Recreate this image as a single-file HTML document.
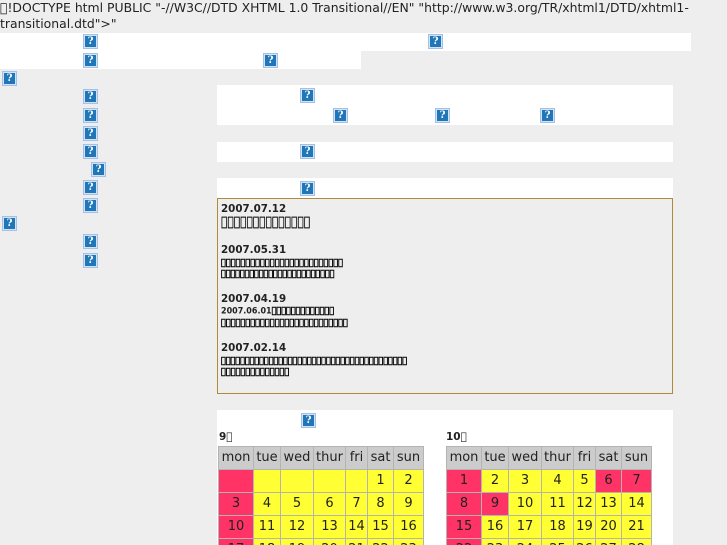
<!DOCTYPE html>
<html><head><meta charset="utf-8"><style>
html,body{margin:0;padding:0;width:727px;height:545px;overflow:hidden}
body{background:#eee;font-family:"DejaVu Sans",sans-serif;color:#222}
#p{position:absolute;left:0;top:0;width:727px;height:545px;overflow:hidden;background:#eee}
.w{position:absolute;background:#fff}
.i{position:absolute;width:15px;height:15px;box-sizing:border-box;background:#1f76b8;border:1px solid #a3c0e6;box-shadow:inset 0 0 0 1px #d3e2f5;color:#fff;font:bold 10px/13px "DejaVu Serif",serif;text-align:center}
.t{position:absolute;white-space:nowrap}
.d{position:absolute;left:221px;font:bold 10.3px/12px "DejaVu Sans",sans-serif;white-space:nowrap;color:#222}
.b{position:absolute;left:221px;white-space:nowrap;font:10.5px/12px "DejaVu Sans",sans-serif;color:#000;transform:scaleY(1.25);transform-origin:left center;-webkit-text-stroke:.2px #000}
.s{position:absolute;left:221px;white-space:nowrap;font:8px/10px "DejaVu Sans",sans-serif;color:#000;transform:scaleY(1.15);transform-origin:left center;-webkit-text-stroke:.45px #000}
.s b{-webkit-text-stroke:0;color:#222}
table{position:absolute;border-collapse:separate;border-spacing:1px;background:#b4b4b4;table-layout:fixed;font:13px "DejaVu Sans",sans-serif;color:#222}
td{padding:0;text-align:center;background:#ff3;height:22px;line-height:22px}
th{padding:0;font-weight:normal;background:#ccc;height:22px;line-height:22px}
td.r{background:#f36}
</style></head><body><div id="p">
<div class="t" style="left:0;top:0;font-size:12.42px;line-height:16px;width:727px">&#xE000;!DOCTYPE html PUBLIC "-//W3C//DTD XHTML 1.0 Transitional//EN" "http://www.w3.org/TR/xhtml1/DTD/xhtml1-<br>transitional.dtd"&gt;"</div>
<div class="w" style="left:0;top:33px;width:691px;height:18px"></div>
<div class="w" style="left:0;top:51px;width:361px;height:18px"></div>
<div class="w" style="left:217px;top:85px;width:456px;height:40px"></div>
<div class="w" style="left:217px;top:142px;width:456px;height:20px"></div>
<div class="w" style="left:217px;top:178px;width:456px;height:20px"></div>
<div class="w" style="left:217px;top:410px;width:456px;height:135px"></div>
<div style="position:absolute;left:217px;top:198px;width:454px;height:194px;border:1px solid #b08a3c;background:#eee"></div>
<div class="i" style="left:83px;top:34px">?</div>
<div class="i" style="left:428px;top:34px">?</div>
<div class="i" style="left:83px;top:53px">?</div>
<div class="i" style="left:263px;top:53px">?</div>
<div class="i" style="left:2px;top:71px">?</div>
<div class="i" style="left:83px;top:89px">?</div>
<div class="i" style="left:83px;top:108px">?</div>
<div class="i" style="left:83px;top:126px">?</div>
<div class="i" style="left:83px;top:144px">?</div>
<div class="i" style="left:91px;top:162px">?</div>
<div class="i" style="left:83px;top:180px">?</div>
<div class="i" style="left:83px;top:198px">?</div>
<div class="i" style="left:2px;top:216px">?</div>
<div class="i" style="left:83px;top:234px">?</div>
<div class="i" style="left:83px;top:253px">?</div>
<div class="i" style="left:300px;top:88px">?</div>
<div class="i" style="left:333px;top:108px">?</div>
<div class="i" style="left:435px;top:108px">?</div>
<div class="i" style="left:540px;top:108px">?</div>
<div class="i" style="left:300px;top:144px">?</div>
<div class="i" style="left:300px;top:181px">?</div>
<div class="i" style="left:301px;top:413px">?</div>
<div class="d" style="top:203px">2007.07.12</div>
<div class="b" style="top:216px;letter-spacing:.06px">&#xE000;&#xE000;&#xE000;&#xE000;&#xE000;&#xE000;&#xE000;&#xE000;&#xE000;&#xE000;&#xE000;&#xE000;&#xE000;&#xE000;</div>
<div class="d" style="top:244px">2007.05.31</div>
<div class="s" style="top:258px;letter-spacing:.08px">&#xE000;&#xE000;&#xE000;&#xE000;&#xE000;&#xE000;&#xE000;&#xE000;&#xE000;&#xE000;&#xE000;&#xE000;&#xE000;&#xE000;&#xE000;&#xE000;&#xE000;&#xE000;&#xE000;&#xE000;&#xE000;&#xE000;&#xE000;&#xE000;&#xE000;</div>
<div class="s" style="top:269px;letter-spacing:-.08px">&#xE000;&#xE000;&#xE000;&#xE000;&#xE000;&#xE000;&#xE000;&#xE000;&#xE000;&#xE000;&#xE000;&#xE000;&#xE000;&#xE000;&#xE000;&#xE000;&#xE000;&#xE000;&#xE000;&#xE000;&#xE000;&#xE000;&#xE000;&#xE000;</div>
<div class="d" style="top:293px">2007.04.19</div>
<div class="s" style="top:306px"><b>2007.06.01</b>&#xE000;&#xE000;&#xE000;&#xE000;&#xE000;&#xE000;&#xE000;&#xE000;&#xE000;&#xE000;&#xE000;&#xE000;&#xE000;</div>
<div class="s" style="top:318px;letter-spacing:.08px">&#xE000;&#xE000;&#xE000;&#xE000;&#xE000;&#xE000;&#xE000;&#xE000;&#xE000;&#xE000;&#xE000;&#xE000;&#xE000;&#xE000;&#xE000;&#xE000;&#xE000;&#xE000;&#xE000;&#xE000;&#xE000;&#xE000;&#xE000;&#xE000;&#xE000;&#xE000;</div>
<div class="d" style="top:342px">2007.02.14</div>
<div class="s" style="top:356px;letter-spacing:-.03px">&#xE000;&#xE000;&#xE000;&#xE000;&#xE000;&#xE000;&#xE000;&#xE000;&#xE000;&#xE000;&#xE000;&#xE000;&#xE000;&#xE000;&#xE000;&#xE000;&#xE000;&#xE000;&#xE000;&#xE000;&#xE000;&#xE000;&#xE000;&#xE000;&#xE000;&#xE000;&#xE000;&#xE000;&#xE000;&#xE000;&#xE000;&#xE000;&#xE000;&#xE000;&#xE000;&#xE000;&#xE000;&#xE000;&#xE000;</div>
<div class="s" style="top:367px;letter-spacing:.07px">&#xE000;&#xE000;&#xE000;&#xE000;&#xE000;&#xE000;&#xE000;&#xE000;&#xE000;&#xE000;&#xE000;&#xE000;&#xE000;&#xE000;</div>
<div class="t" style="left:219px;top:431px;font:bold 10.5px/13px 'DejaVu Sans',sans-serif">9&#xE000;</div>
<div class="t" style="left:446px;top:431px;font:bold 10.5px/13px 'DejaVu Sans',sans-serif">10&#xE000;</div>
<table style="left:218px;top:446px;width:205px">
<colgroup><col style="width:34px"><col style="width:26px"><col style="width:32px"><col style="width:31px"><col style="width:21px"><col style="width:25px"><col style="width:29px"></colgroup>
<tr><th>mon</th><th>tue</th><th>wed</th><th>thur</th><th>fri</th><th>sat</th><th>sun</th></tr>
<tr><td class="r"></td><td></td><td></td><td></td><td></td><td>1</td><td>2</td></tr>
<tr><td class="r">3</td><td>4</td><td>5</td><td>6</td><td>7</td><td>8</td><td>9</td></tr>
<tr><td class="r">10</td><td>11</td><td>12</td><td>13</td><td>14</td><td>15</td><td>16</td></tr>
<tr><td class="r">17</td><td>18</td><td>19</td><td>20</td><td>21</td><td>22</td><td>23</td></tr>
</table>
<table style="left:446px;top:446px;width:205px">
<colgroup><col style="width:34px"><col style="width:26px"><col style="width:32px"><col style="width:31px"><col style="width:21px"><col style="width:25px"><col style="width:29px"></colgroup>
<tr><th>mon</th><th>tue</th><th>wed</th><th>thur</th><th>fri</th><th>sat</th><th>sun</th></tr>
<tr><td class="r">1</td><td>2</td><td>3</td><td>4</td><td>5</td><td class="r">6</td><td class="r">7</td></tr>
<tr><td class="r">8</td><td class="r">9</td><td>10</td><td>11</td><td>12</td><td>13</td><td>14</td></tr>
<tr><td class="r">15</td><td>16</td><td>17</td><td>18</td><td>19</td><td>20</td><td>21</td></tr>
<tr><td class="r">22</td><td>23</td><td>24</td><td>25</td><td>26</td><td>27</td><td>28</td></tr>
</table>
</div></body></html>
